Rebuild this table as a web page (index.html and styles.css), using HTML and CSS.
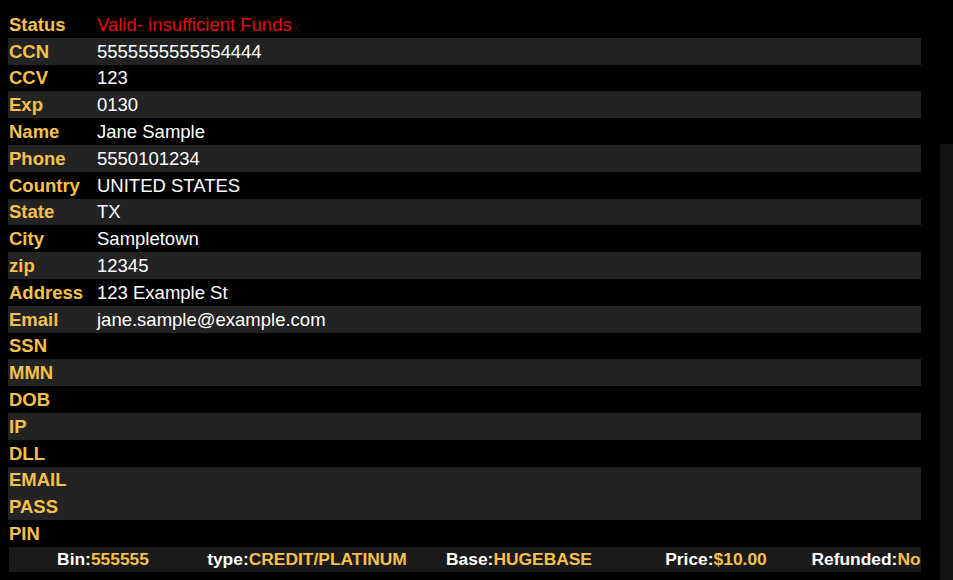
FILE: index.html
```html
<!DOCTYPE html>
<html lang="en">
  <head>
    <meta charset="UTF-8" />
    <meta name="viewport" content="width=device-width, initial-scale=1.0" />
    <title>Card details</title>
    <link rel="stylesheet" href="styles.css">
  </head>
  <body>
    <div class="page">
      <div class="details">
        <!-- Detail rows (sample placeholder values) -->
        <div class="row"><span class="label">Status</span><span class="value status">Valid- insufficient Funds</span></div>
        <div class="row shade"><span class="label">CCN</span><span class="value">5555555555554444</span></div>
        <div class="row"><span class="label">CCV</span><span class="value">123</span></div>
        <div class="row shade"><span class="label">Exp</span><span class="value">0130</span></div>
        <div class="row"><span class="label">Name</span><span class="value">Jane Sample</span></div>
        <div class="row shade"><span class="label">Phone</span><span class="value">5550101234</span></div>
        <div class="row"><span class="label">Country</span><span class="value">UNITED STATES</span></div>
        <div class="row shade"><span class="label">State</span><span class="value">TX</span></div>
        <div class="row"><span class="label">City</span><span class="value">Sampletown</span></div>
        <div class="row shade"><span class="label">zip</span><span class="value">12345</span></div>
        <div class="row"><span class="label">Address</span><span class="value">123 Example St</span></div>
        <div class="row shade"><span class="label">Email</span><span class="value">jane.sample@example.com</span></div>
        <div class="row"><span class="label">SSN</span><span class="value"></span></div>
        <div class="row shade"><span class="label">MMN</span><span class="value"></span></div>
        <div class="row"><span class="label">DOB</span><span class="value"></span></div>
        <div class="row shade"><span class="label">IP</span><span class="value"></span></div>
        <div class="row"><span class="label">DLL</span><span class="value"></span></div>
        <div class="row shade"><span class="label">EMAIL</span><span class="value"></span></div>
        <div class="row shade"><span class="label">PASS</span><span class="value"></span></div>
        <div class="row"><span class="label">PIN</span><span class="value"></span></div>

        <!-- Summary bar -->
        <div class="summary">
          <div class="cell">Bin:<span>555555</span></div>
          <div class="cell">type:<span>CREDIT/PLATINUM</span></div>
          <div class="cell">Base:<span>HUGEBASE</span></div>
          <div class="cell">Price:<span>$10.00</span></div>
          <div class="cell">Refunded:<span>No</span></div>
        </div>
      </div>
      <div class="gutter"><div class="track"></div></div>
    </div>
  </body>
</html>
```

FILE: styles.css
```css
html {
  background-color: #000;
}
body {
  margin: 0;
  background-color: #000;
  font-family: "Liberation Sans", Arial, sans-serif;
  color: #fff;
  height: 580px;
  overflow: hidden;
}
.page {
  display: flex;
  height: 580px;
}
.details {
  width: 913px;
  margin-left: 8px;
  padding-top: 11px;
}
.row {
  display: flex;
  align-items: center;
  box-sizing: border-box;
  height: 26.8px;
  padding-top: 1px;
  font-size: 18.5px;
}
.row.shade {
  background-color: #232323;
}
.label {
  width: 88px;
  padding-left: 1px;
  font-weight: bold;
  color: #f6c14b;
}
.value {
  color: #fff;
}
.value.status {
  color: #e30b0b;
}
.summary {
  display: grid;
  grid-template-columns: 188px 220px 204px 190px 110px;
  align-items: center;
  height: 25px;
  margin-left: 1px;
  background-color: #1a1a1a;
  font-size: 17.4px;
  font-weight: bold;
  color: #fff;
}
.summary .cell {
  text-align: center;
  white-space: nowrap;
}
.summary .cell span {
  color: #f6c14b;
}
.gutter {
  flex: 1;
  padding-left: 19px;
}
.track {
  margin-top: 144px;
  height: 436px;
  width: 13px;
  background-color: #121212;
}
```
